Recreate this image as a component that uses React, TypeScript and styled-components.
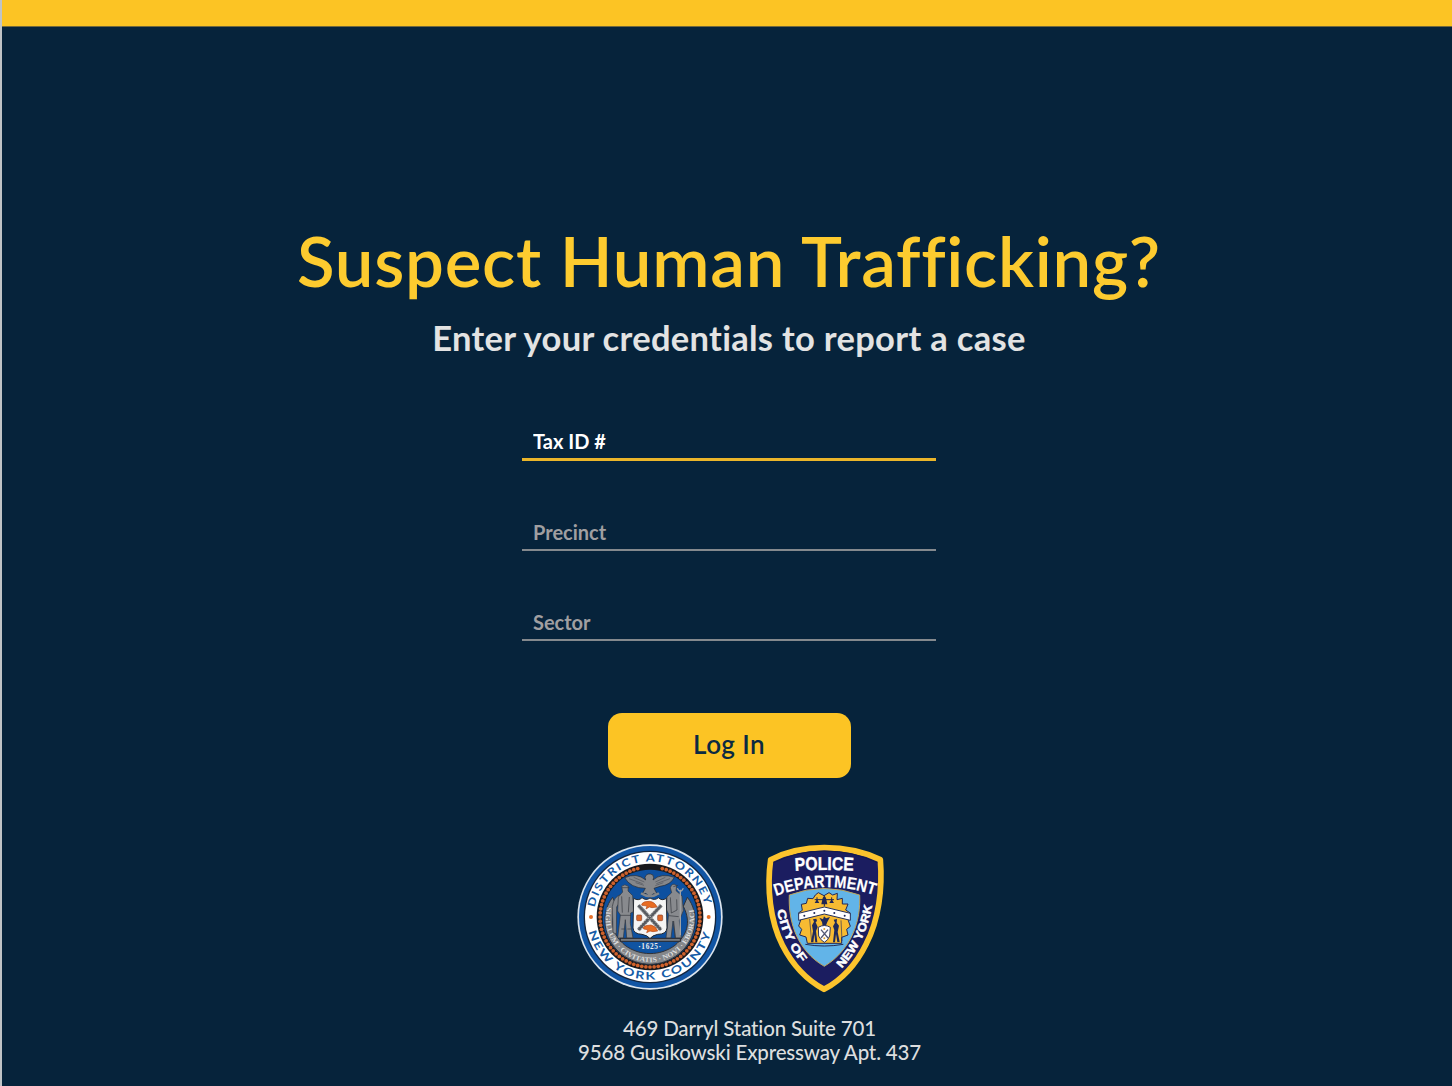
import React from "react";
import styled, { createGlobalStyle } from "styled-components";

const NAVY = "#06233b";
const GOLD = "#fcc424";

const GlobalStyle = createGlobalStyle`
  *, *::before, *::after { box-sizing: border-box; }
  html, body { margin: 0; padding: 0; background: ${NAVY}; }
  body { font-family: Lato, "Open Sans", "Liberation Sans", sans-serif; }
`;

const Page = styled.div`
  width: 1452px;
  height: 1086px;
  overflow: hidden;
  display: flex;
  flex-direction: column;
  background: ${NAVY};
  border-left: 2px solid #bfc3c6;
`;

const TopBar = styled.header`
  flex: none;
  height: 27px;
  background: ${GOLD};
  border-bottom: 1px solid #73693b;
`;

const Main = styled.main`
  display: flex;
  flex-direction: column;
  align-items: center;
  padding: 190px 0 0 4px;
`;

const Title = styled.h1`
  margin: 0;
  height: 92px;
  line-height: 88px;
  font-size: 69px;
  font-weight: 600;
  letter-spacing: 0.72px;
  white-space: nowrap;
  color: #fdcb2f;
`;

const Subtitle = styled.h2`
  margin: 6px 0 0;
  height: 48px;
  line-height: 46px;
  font-size: 34.5px;
  font-weight: 700;
  letter-spacing: 0.3px;
  white-space: nowrap;
  color: #e3e3e3;
`;

const Form = styled.form`
  display: flex;
  flex-direction: column;
  align-items: center;
  width: 414px;
  margin-top: 59px;
`;

const Field = styled.input<{ $active?: boolean }>`
  display: block;
  width: 414px;
  height: ${(p) => (p.$active ? 39 : 38)}px;
  margin-bottom: ${(p) => (p.$active ? 52 : 51.5)}px;
  padding: 2px 0 0 11px;
  border: 0;
  border-bottom: ${(p) => (p.$active ? "3px solid #eab52a" : "2px solid #84898e")};
  border-radius: 0;
  outline: 0;
  background: transparent;
  font: 700 20px/34px Lato, "Liberation Sans", sans-serif;
  color: #fff;
  &::placeholder {
    color: ${(p) => (p.$active ? "#fff" : "#a09fa1")};
    opacity: 1;
  }
`;

const LoginButton = styled.button`
  width: 243px;
  height: 65px;
  margin-top: 21px;
  padding: 0 0 4px;
  border: 0;
  border-radius: 14px;
  background: ${GOLD};
  font: 600 26px/60px Lato, "Liberation Sans", sans-serif;
  letter-spacing: 0.4px;
  color: #0b2a42;
`;

const Emblems = styled.div`
  display: flex;
  gap: 25px;
  margin: 60px 0 0 7px;
`;

const Emblem = styled.svg`
  display: block;
  flex: none;
`;

const Address = styled.address`
  margin: 18px 0 0 41px;
  font-style: normal;
  font-size: 20.5px;
  font-weight: 500;
  letter-spacing: -0.16px;
  line-height: 24px;
  text-align: center;
  white-space: nowrap;
  color: #dcdedf;
`;

const beads = Array.from({ length: 76 }, (_, i) => (i / 76) * Math.PI * 2).filter(
  (a) => Math.abs(Math.atan2(Math.cos(a), -Math.sin(a))) > 0.2
);

function AttorneySeal() {
  return (
    <Emblem width="160" height="160" viewBox="0 0 480 480" role="img" aria-label="District Attorney New York County">
      <defs>
        <path id="sealTop" d="M74.6 209 A168 168 0 0 1 405.4 209" />
        <path id="sealBottom" d="M56.5 281 A189 189 0 0 0 423.5 281" />
        <path id="sealBanner" d="M111 207 A133 133 0 1 0 369 207" />
      </defs>
      <circle cx="240" cy="237" r="218" fill="#dce5ee" />
      <circle cx="240" cy="237" r="213" fill="#1155a4" />
      <circle cx="240" cy="237" r="199" fill="#14263e" />
      <circle cx="240" cy="237" r="195" fill="#fff" />
      <circle cx="240" cy="237" r="160" fill="#18191d" />
      <circle cx="240" cy="237" r="142" fill="#0d50a0" />
      {beads.map((a) => (
        <circle key={a} cx={240 + 150 * Math.cos(a)} cy={237 + 150 * Math.sin(a)} r="5.6" fill="#cf622c" />
      ))}
      <path
        d="M128 178 C90 224 98 304 154 348 C207 389 274 389 326 348 C382 304 390 224 352 178 L340 205 C365 255 350 292 315 322 C270 355 210 355 165 322 C130 292 116 253 140 205 Z"
        fill="#85878a"
        stroke="#303238"
        strokeWidth="3"
      />
      <g fontFamily="Lato, sans-serif" fontWeight="700" fontSize="32" fill="#155ca7" letterSpacing="4">
        <text>
          <textPath href="#sealTop" textLength="464" lengthAdjust="spacingAndGlyphs">DISTRICT ATTORNEY</textPath>
        </text>
        <text>
          <textPath href="#sealBottom" textLength="502" lengthAdjust="spacingAndGlyphs">NEW YORK COUNTY</textPath>
        </text>
      </g>
      <text fontFamily="Liberation Serif, serif" fontWeight="700" fontSize="21" fill="#dcddde">
        <textPath href="#sealBanner" textLength="476" lengthAdjust="spacingAndGlyphs">SIGILLUM · CIVITATIS · NOVI · EBORACI</textPath>
      </text>
      <circle cx="63" cy="237" r="6" fill="#e56f29" />
      <circle cx="416" cy="237" r="6" fill="#e56f29" />
      {/* eagle */}
      <path
        d="M164 119 Q200 103 227 126 L225 118 Q229 106 241 108 Q251 108 251 119 L249 126 Q274 104 313 118 Q302 141 270 145 L252 151 L263 171 L250 167 L239 177 L228 166 L216 169 L226 151 Q181 150 164 119Z"
        fill="#85878b"
        stroke="#25292f"
        strokeWidth="2"
      />
      <path d="M177 122 L218 137 M191 118 L223 132 M300 122 L259 137 M286 118 L256 132 M197 134 L222 142 M280 134 L256 143" stroke="#50535a" strokeWidth="2" fill="none" />
      <path d="M213 166 Q240 184 267 166" fill="none" stroke="#85878a" strokeWidth="7" />
      {/* sailor */}
      <g fill="#888a8e" stroke="#33363c" strokeWidth="2">
        <path d="M151 170 Q132 176 127 205 L129 284 L139 288 L140 207 L151 190Z" />
        <path d="M155 145 Q164 136 175 145 L174 159 L188 173 L191 221 L182 225 L181 256 L189 300 L170 300 L166 245 L160 300 L143 300 L151 231 L143 219 L145 177 L158 162Z" />
        <path d="M156 149 H178 M155 175 L157 224 M178 177 L175 223 M151 232 H183 M154 273 H166 M172 273 H184" fill="none" />
      </g>
      {/* native figure */}
      <g fill="#888a8e" stroke="#33363c" strokeWidth="2">
        <path d="M301 149 Q307 132 320 143 L318 158 L336 174 L340 218 L328 248 L334 300 L316 300 L309 249 L303 300 L288 300 L296 229 L289 215 L291 177 L305 164Z" />
        <path d="M310 146 L324 142 M301 178 L304 225 L321 216 L320 184 M297 233 L326 236 M311 249 L316 299" fill="none" />
        <path d="M331 155 V292 M322 151 Q331 170 340 151" fill="none" stroke="#a1a2a4" strokeWidth="4" />
      </g>
      {/* shield */}
      <path d="M191 181 Q206 190 216 179 Q228 189 240 180 Q254 189 265 179 Q276 190 289 181 L291 270 Q289 289 263 289 Q247 292 240 302 Q233 292 216 289 Q191 288 189 270Z" fill="#f5f5f5" stroke="#252930" strokeWidth="3" />
      <path d="M205 202 L273 276 M274 202 L205 276" stroke="#575a60" strokeWidth="11" />
      <path d="M202 205 L270 279 M208 199 L276 273 M271 199 L202 273 M277 205 L208 279" stroke="#deded9" strokeWidth="2" strokeDasharray="5 3" />
      <rect x="200" y="231" width="15" height="17" rx="3" fill="#dc672a" stroke="#8a4028" strokeWidth="2" />
      <rect x="263" y="231" width="15" height="17" rx="3" fill="#dc672a" stroke="#8a4028" strokeWidth="2" />
      <path d="M215 198 Q221 189 238 190 Q255 192 261 207 L246 209 L238 207 L228 213 L231 204 L216 202Z" fill="#e86c22" stroke="#b44c1e" strokeWidth="2" />
      <path d="M220 268 Q226 261 243 261 Q258 264 263 279 L249 281 L240 279 L230 284 L233 275 L221 273Z" fill="#e86c22" stroke="#b44c1e" strokeWidth="2" />
      <rect x="151" y="301" width="180" height="9" fill="#777a7e" stroke="#292b30" strokeWidth="3" />
      <path d="M169 312 H312 L298 330 Q269 341 240 342 Q211 341 183 330Z" fill="#1154a1" />
      <text x="240" y="333" textAnchor="middle" fontFamily="Liberation Serif, serif" fontSize="22" fontWeight="700" letterSpacing="2" fill="#eee">·1625·</text>
    </Emblem>
  );
}

function PoliceBadge() {
  return (
    <Emblem width="140" height="160" viewBox="0 0 420 480" role="img" aria-label="Police Department City of New York">
      <defs>
        <path id="badgePolice" d="M120 99 Q208 93 297 99" />
        <path id="badgeDepartment" d="M62 174 Q208 122 357 171" />
        <path id="badgeCity" d="M66 217 Q82 304 141 378" />
        <path id="badgeYork" d="M260 391 Q332 315 352 199" />
      </defs>
      <path
        d="M47 65 Q118 29 208 29 Q301 29 376 65 C383 151 371 247 334 317 C303 380 256 428 207 454 C157 427 113 382 82 321 C45 247 35 149 47 65Z"
        fill="#1b1d60"
        stroke="#fcc42d"
        strokeWidth="17"
        strokeLinejoin="round"
      />
      <path d="M56 74 Q126 39 208 39 Q294 39 367 74" fill="none" stroke="#141a4c" strokeWidth="3" />
      <path
        d="M103 171 Q206 132 314 171 C318 248 290 335 208 385 C126 338 99 250 103 171Z"
        fill="#62b4e8"
        stroke="#bda65c"
        strokeWidth="3"
      />
      <g fontFamily="Liberation Sans, sans-serif" fontWeight="700" fill="#fff">
        <text fontSize="56" stroke="#fff" strokeWidth="1">
          <textPath href="#badgePolice" textLength="176" lengthAdjust="spacingAndGlyphs">POLICE</textPath>
        </text>
        <text fontSize="51" stroke="#fff" strokeWidth="0.5">
          <textPath href="#badgeDepartment" textLength="302" lengthAdjust="spacingAndGlyphs">DEPARTMENT</textPath>
        </text>
        <text fontSize="35" stroke="#fff" strokeWidth="1.5">
          <textPath href="#badgeCity" textLength="175" lengthAdjust="spacingAndGlyphs">CITY OF</textPath>
        </text>
        <text fontSize="35" stroke="#fff" strokeWidth="1.5">
          <textPath href="#badgeYork" textLength="212" lengthAdjust="spacingAndGlyphs">NEW YORK</textPath>
        </text>
      </g>
      {/* city arms */}
      <path
        d="M181 171 L190 164 L207 173 L222 164 L233 171 L247 166 L246 185 L262 181 L262 198 L279 198 L272 216 L286 225 L280 248 L286 265 L275 274 L279 291 L260 298 L260 316 H157 L153 297 L134 291 L140 274 L131 264 L137 246 L130 225 L142 217 L139 199 L154 196 L158 181 L174 182Z"
        fill="#f7bb32"
        stroke="#222758"
        strokeWidth="3"
      />
      <path d="M208 173 V205 M179 185 H237 M186 178 V190 M230 178 V190" stroke="#20264b" strokeWidth="3" />
      <path d="M203 180 Q208 170 213 180 L217 199 H199Z M179 195 L186 184 L193 195Z M223 195 L230 184 L237 195Z" fill="#202652" />
      <path d="M131 226 L208 207 L286 226 V247 L208 228 L131 247Z" fill="#fff" stroke="#25315a" strokeWidth="3" />
      <g fill="#1e295a">
        <circle cx="148" cy="233" r="3" />
        <circle cx="178" cy="225" r="3" />
        <circle cx="208" cy="218" r="3" />
        <circle cx="238" cy="225" r="3" />
        <circle cx="269" cy="233" r="3" />
        <path d="M193 239 L204 244 L207 235 L213 241 L225 237 L217 252 L212 265 L203 264 L201 252Z" />
        <path d="M174 244 L184 242 L186 249 L182 253 L188 267 L183 279 L187 313 H181 L178 289 L175 313 H168 L174 280 L171 262 L177 251Z" />
        <path d="M236 245 L246 243 L245 254 L252 263 L248 282 L254 312 H247 L243 288 L240 313 H234 L238 276 L234 265 L240 254Z" />
        <path d="M164 243 L170 312 M258 247 L261 309" stroke="#27305c" strokeWidth="2" />
      </g>
      <path d="M190 268 Q208 257 226 268 L224 294 Q219 307 208 313 Q196 306 191 294Z" fill="#fff" stroke="#30375b" strokeWidth="3" />
      <path d="M198 275 L219 300 M219 275 L198 300" stroke="#555a76" strokeWidth="4" />
      <circle cx="208" cy="273" r="3" fill="#d9a132" />
      <circle cx="208" cy="301" r="3" fill="#d9a132" />
      <path d="M151 319 Q208 329 265 319" fill="none" stroke="#252a51" strokeWidth="3" />
    </Emblem>
  );
}

export default function App() {
  return (
    <>
      <GlobalStyle />
      <Page>
        <TopBar />
        <Main>
          <Title>Suspect Human Trafficking?</Title>
          <Subtitle>Enter your credentials to report a case</Subtitle>
          <Form onSubmit={(e: React.FormEvent) => e.preventDefault()}>
            <Field $active placeholder="Tax ID #" aria-label="Tax ID #" />
            <Field placeholder="Precinct" aria-label="Precinct" />
            <Field placeholder="Sector" aria-label="Sector" />
            <LoginButton type="submit">Log In</LoginButton>
          </Form>
          <Emblems>
            <AttorneySeal />
            <PoliceBadge />
          </Emblems>
          <Address>
            469 Darryl Station Suite 701
            <br />
            9568 Gusikowski Expressway Apt. 437
          </Address>
        </Main>
      </Page>
    </>
  );
}
